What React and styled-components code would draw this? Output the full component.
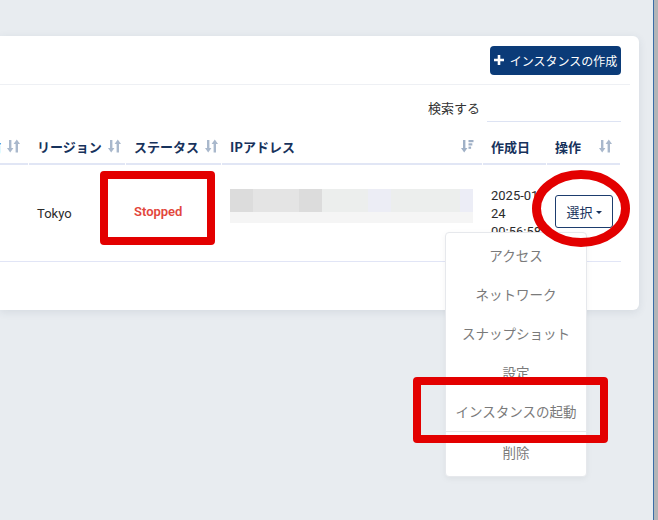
import React from "react";
import styled, { createGlobalStyle } from "styled-components";

const GlobalStyle = createGlobalStyle`
  body {
    margin: 0;
    background: #e8ecf0;
    font-family: Roboto, "Noto Sans CJK JP", sans-serif;
  }
`;

const Page = styled.div`
  display: flex;
  height: 520px;
  overflow: hidden;
`;

const Main = styled.div`
  flex: 1;
  position: relative;
  padding-top: 36px;
`;

const EdgeBar = styled.div`
  width: 4px;
  border-left: 1px solid #3b6ea8;
  background: #b3b5b8;
`;

const Card = styled.div`
  width: 639px;
  height: 274px;
  background: #fff;
  border-radius: 0 6px 6px 0;
  box-shadow: 0 2px 8px rgba(40, 60, 90, 0.1);
`;

const CardHeader = styled.div`
  height: 48px;
  display: flex;
  align-items: center;
  justify-content: flex-end;
  margin-right: 9px;
  padding-right: 9px;
  border-bottom: 1px solid #eef0f4;
`;

const CreateButton = styled.button`
  height: 29px;
  width: 131px;
  display: flex;
  align-items: center;
  justify-content: center;
  gap: 6px;
  border: none;
  border-radius: 4px;
  background: #0b3b78;
  color: #fff;
  font-family: "Noto Sans CJK JP", sans-serif;
  font-size: 12px;
  padding: 0;
`;

const SearchRow = styled.div`
  height: 44px;
  display: flex;
  align-items: center;
  justify-content: flex-end;
  padding-right: 18px;
  gap: 7px;
`;

const SearchLabel = styled.span`
  font-family: "Noto Sans CJK JP", sans-serif;
  font-size: 13px;
  color: #333;
  margin-top: 1px;
`;

const SearchInput = styled.div`
  width: 134px;
  height: 26px;
  border-bottom: 1px solid #dde3f3;
  margin-top: 2px;
`;

const Table = styled.div`
  width: 621px;
  display: grid;
  grid-template-columns: 29px 97px 96px 261px 64px 74px;
`;

const HeadCell = styled.div`
  height: 34px;
  display: flex;
  align-items: center;
  justify-content: ${(p) => (p.$end ? "flex-end" : "space-between")};
  gap: 6px;
  padding: 0 8px 0 8px;
  overflow: hidden;
  border-bottom: 2px solid #e1e6f5;
  margin-right: 1px;
  font-family: "Noto Sans CJK JP", sans-serif;
  font-size: 13px;
  font-weight: 700;
  color: #17325c;
  white-space: nowrap;
`;

const HeadLabel = styled.span`
  flex-shrink: 0;
`;

const BodyCell = styled.div`
  height: 96px;
  display: flex;
  align-items: center;
  padding: 0 8px;
  border-bottom: 1px solid #e1e5f6;
  font-size: 13px;
  color: #2b2b2b;
  position: relative;
`;

const Status = styled.span`
  color: #e2473c;
  font-weight: 600;
  margin-top: -4px;
`;

const Blur = styled.div`
  display: flex;
  flex-direction: column;
  width: 243px;
  margin-top: -15px;
`;

const BlurRow = styled.div`
  display: flex;
  height: 23px;
`;

const BlurPiece = styled.div`
  height: 100%;
  background: ${(p) => p.$c};
`;

const BlurStrip = styled.div`
  height: 11px;
  background: #f5f5f5;
`;

const DateText = styled.div`
  font-size: 13px;
  line-height: 18px;
  color: #2b2b2b;
  white-space: nowrap;
  margin-top: 2px;
`;

const SelectButton = styled.div`
  width: 56px;
  height: 31px;
  border: 1px solid #1d3d6e;
  border-radius: 3px;
  display: flex;
  align-items: center;
  justify-content: center;
  gap: 3px;
  font-family: "Noto Sans CJK JP", sans-serif;
  font-size: 13px;
  color: #17325c;
  margin-top: -3px;
`;

const Caret = styled.span`
  width: 0;
  height: 0;
  border-left: 3px solid transparent;
  border-right: 3px solid transparent;
  border-top: 3px solid #17325c;
  margin-top: 2px;
`;

const Menu = styled.div`
  position: absolute;
  left: 445px;
  top: 232px;
  width: 140px;
  padding: 2px 0 5px;
  background: #fff;
  border: 1px solid #e6e8ec;
  border-radius: 4px;
  box-shadow: 0 2px 6px rgba(0, 0, 0, 0.05);
  z-index: 5;
`;

const MenuItem = styled.div`
  height: 39px;
  display: flex;
  align-items: center;
  justify-content: center;
  font-family: "Noto Sans CJK JP", sans-serif;
  font-size: 13.5px;
  color: #7a7a7a;
`;

const Divider = styled.div`
  height: 1px;
  margin: 1px 0 0;
  background: #e8e8e8;
`;

const RedBox = styled.div`
  position: absolute;
  left: ${(p) => p.$x}px;
  top: ${(p) => p.$y}px;
  width: ${(p) => p.$w}px;
  height: ${(p) => p.$h}px;
  box-sizing: border-box;
  border: 8px solid #e30000;
  border-radius: 4px;
  z-index: 10;
`;

const Ellipse = styled.svg`
  position: absolute;
  left: 525px;
  top: 160px;
  z-index: 10;
`;

const SortIcon = ({ active }) =>
  active ? (
    <svg width="13" height="14" viewBox="0 0 13 14" style={{ flexShrink: 0 }}>
      <g fill="#9fb0c6">
        <rect x="2" y="1" width="2.4" height="9" />
        <path d="M0 9h6.4l-3.2 4.5z" />
        <rect x="7.5" y="1" width="5" height="2.2" />
        <rect x="7.5" y="4.3" width="3.8" height="2.2" />
        <rect x="7.5" y="7.6" width="2.6" height="2.2" />
      </g>
    </svg>
  ) : (
    <svg width="13" height="14" viewBox="0 0 13 14" style={{ flexShrink: 0 }}>
      <g fill="#a9b8cc">
        <rect x="2" y="1" width="2.4" height="9" />
        <path d="M0 9h6.4l-3.2 4.5z" />
        <rect x="8.6" y="4" width="2.4" height="9.5" />
        <path d="M6.6 5h6.4L9.8 0.5z" />
      </g>
    </svg>
  );

const blurPieces = [
  [23, "#dcdcdc"],
  [46, "#e4e4e4"],
  [23, "#dcdcdc"],
  [46, "#eceeed"],
  [23, "#ecedf5"],
  [69, "#eceeed"],
  [13, "#ecedf6"],
];

const menuItems = ["アクセス", "ネットワーク", "スナップショット", "設定", "インスタンスの起動"];

const App = () => (
  <>
    <GlobalStyle />
    <Page>
      <Main>
        <Card>
          <CardHeader>
            <CreateButton>
              <svg width="10" height="10" viewBox="0 0 10 10">
                <path d="M3.7 0h2.6v3.7H10v2.6H6.3V10H3.7V6.3H0V3.7h3.7z" fill="#fff" />
              </svg>
              インスタンスの作成
            </CreateButton>
          </CardHeader>
          <SearchRow>
            <SearchLabel>検索する</SearchLabel>
            <SearchInput />
          </SearchRow>
          <Table>
            <HeadCell $end>
              <HeadLabel>名前</HeadLabel>
              <SortIcon />
            </HeadCell>
            <HeadCell>
              <HeadLabel>リージョン</HeadLabel>
              <SortIcon />
            </HeadCell>
            <HeadCell>
              <HeadLabel>ステータス</HeadLabel>
              <SortIcon />
            </HeadCell>
            <HeadCell>
              <HeadLabel>IPアドレス</HeadLabel>
              <SortIcon active />
            </HeadCell>
            <HeadCell>
              <HeadLabel>作成日</HeadLabel>
            </HeadCell>
            <HeadCell>
              <HeadLabel>操作</HeadLabel>
              <SortIcon />
            </HeadCell>

            <BodyCell />
            <BodyCell>Tokyo</BodyCell>
            <BodyCell>
              <Status>Stopped</Status>
            </BodyCell>
            <BodyCell>
              <Blur>
                <BlurRow>
                  {blurPieces.map(([w, c], i) => (
                    <BlurPiece key={i} $c={c} style={{ width: w }} />
                  ))}
                </BlurRow>
                <BlurStrip />
              </Blur>
            </BodyCell>
            <BodyCell>
              <DateText>
                2025-01-
                <br />
                24
                <br />
                00:56:58
              </DateText>
            </BodyCell>
            <BodyCell>
              <SelectButton>
                選択
                <Caret />
              </SelectButton>
            </BodyCell>
          </Table>
        </Card>

        <Menu>
          {menuItems.map((m) => (
            <MenuItem key={m}>{m}</MenuItem>
          ))}
          <Divider />
          <MenuItem>削除</MenuItem>
        </Menu>

        <RedBox $x={100} $y={171} $w={115} $h={74} />
        <RedBox $x={413} $y={377} $w={195} $h={66} />
        <Ellipse width="112" height="96" viewBox="0 0 112 96">
          <ellipse cx="56" cy="48.5" rx="44.5" ry="34" fill="none" stroke="#e30000" strokeWidth="9" />
        </Ellipse>
      </Main>
      <EdgeBar />
    </Page>
  </>
);

export default App;
